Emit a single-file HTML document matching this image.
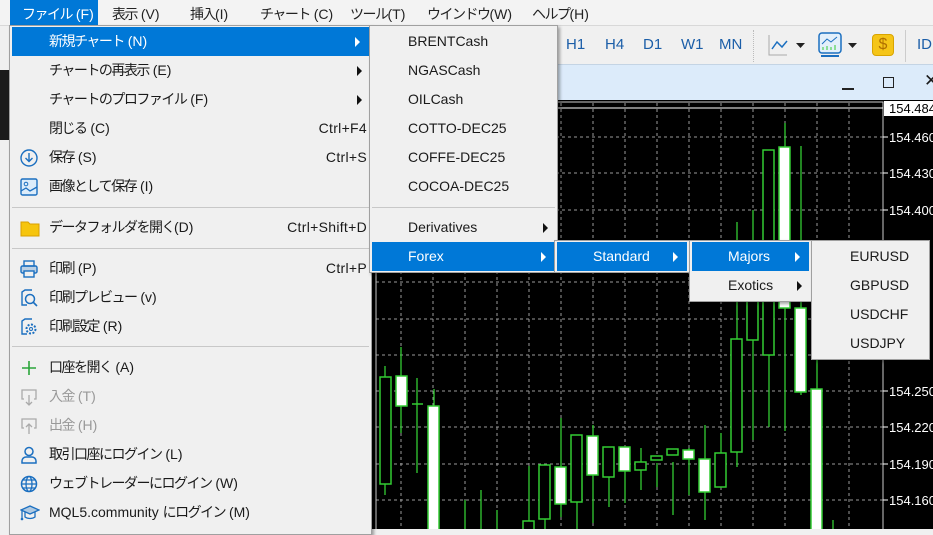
<!DOCTYPE html>
<html><head><meta charset="utf-8">
<style>
*{margin:0;padding:0;box-sizing:border-box}
body{width:933px;height:529px;overflow:hidden;position:relative;background:#f0f0f0;font-family:"Liberation Sans","Noto Sans CJK JP",sans-serif;font-size:14px;color:#1a1a1a}
.a{position:absolute}
.mb span{position:absolute;top:4px;font-size:14px;color:#222;white-space:nowrap}
.menu{position:absolute;background:#f0f0f0;border:1px solid #a0a0a0;box-shadow:2px 2px 3px rgba(0,0,0,.35)}
.it{position:absolute;left:0;right:0;height:29px;line-height:29px;white-space:nowrap}
.it.h{background:#0078d7;color:#fff;margin:0 2px}
.arr{position:absolute;right:9px;top:10px;width:0;height:0;border-left:5px solid #111;border-top:5px solid transparent;border-bottom:5px solid transparent}
.h .arr{border-left-color:#fff}
.sc{position:absolute;right:4px;letter-spacing:.3px}
b{font-weight:normal;letter-spacing:-1.5px}
.sep{position:absolute;left:2px;right:2px;height:1px;background:#c8c8c8}
.ic{position:absolute;left:10px;top:6px}
.dis{color:#999}
.tb{position:absolute;top:36px;color:#1b5ea8;font-size:15px}
</style></head><body>
<div class="a" style="left:0;top:0;width:933px;height:25px;background:#f3f3f3"></div>
<div class="a" style="left:10px;top:0;width:88px;height:25px;background:#0078d7"></div>
<div class="mb">
<span style="left:22px;color:#fff"><b>ファイル</b> (F)</span>
<span style="left:112px"><b>表示</b> (V)</span>
<span style="left:190px"><b>挿入</b>(I)</span>
<span style="left:260px"><b>チャート</b> (C)</span>
<span style="left:350px"><b>ツール</b>(T)</span>
<span style="left:427px"><b>ウインドウ</b>(W)</span>
<span style="left:532px"><b>ヘルプ</b>(H)</span>
</div>
<div class="a" style="left:0;top:25px;width:933px;height:39px;background:#f0f0f0;border-top:1px solid #d8d8d8"></div>
<div class="tb" style="left:566px">H1</div>
<div class="tb" style="left:605px">H4</div>
<div class="tb" style="left:643px">D1</div>
<div class="tb" style="left:681px">W1</div>
<div class="tb" style="left:719px">MN</div>
<div class="a" style="left:753px;top:30px;height:32px;border-left:1px dotted #bbb"></div>
<svg class="a" style="left:767px;top:33px" width="45" height="26"><path d="M2 2V22H20" stroke="#aaa" fill="none"/><path d="M5 16L10 9L15 14L20 8" stroke="#1b6fc0" stroke-width="1.5" fill="none"/><path d="M29 10h9l-4.5 5z" fill="#222"/></svg>
<svg class="a" style="left:818px;top:32px" width="45" height="28"><rect x="1" y="1" width="22" height="20" rx="3" fill="#e3f0fb" stroke="#1b6fc0" stroke-width="1.5"/><path d="M4 12l5-5 4 3 6-5" stroke="#1b6fc0" fill="none"/><path d="M5 18v-3M9 18v-4M13 18v-3M17 18v-5" stroke="#3c3"/><path d="M3 24h18" stroke="#1b6fc0" stroke-width="2"/><path d="M30 11h9l-4.5 5z" fill="#222"/></svg>
<div class="a" style="left:872px;top:34px;width:22px;height:22px;background:#f5c518;border:1px solid #d9a400;border-radius:4px;color:#b07000;font-size:16px;text-align:center;line-height:20px">$</div>
<div class="a" style="left:905px;top:30px;height:32px;border-left:1px solid #ccc"></div>
<div class="tb" style="left:917px">IDE</div>
<div class="a" style="left:370px;top:64px;width:563px;height:36px;background:#dcebfa;border-top:1px solid #c4d4e4"></div>
<div class="a" style="left:842px;top:88px;width:12px;height:1.5px;background:#222"></div>
<div class="a" style="left:883px;top:77px;width:11px;height:11px;border:1.5px solid #222"></div>
<div class="a" style="left:924px;top:71px;font-size:17px">✕</div>
<svg class="a" style="left:370px;top:100px" width="563" height="429">
<rect width="563" height="429" fill="#000"/>
<g stroke="#9a9a9a" stroke-dasharray="3,3" stroke-width="1">
<path d="M31 3V429M63 3V429M95 3V429M127 3V429M159 3V429M191 3V429M223 3V429M255 3V429M287 3V429M319 3V429M351 3V429M383 3V429M415 3V429M447 3V429M479 3V429"/>
<path d="M6 37H513M6 73H513M6 110H513M6 146H513M6 182H513M6 219H513M6 255H513M6 291H513M6 327H513M6 364H513M6 400H513"/>
</g>
<rect x="6" y="2" width="507" height="430" fill="none" stroke="#ccc"/>
<path d="M6 8H513" stroke="#fff"/>
<g stroke="#3c3" stroke-width="1.3">
<path d="M15 266V395M31 247V333M47 278V373M64 289V429M95 400V429M111 390V429M127 410V429M159 366V429M175 365V429M191 318V417M207 335V429M223 325V423M239 348V407M255 348V403M271 348V390M287 363V387M303 362V415M319 348V395M335 325V420M351 333V387M367 122V367M383 110V340M399 98V327M415 23V331M431 46V295M447 252V429M463 420V429M479 430V429"/>
</g>
<g stroke="#3c3" stroke-width="1.5">
<rect x="10" y="277" width="11" height="107" fill="#000"/>
<rect x="26" y="276" width="11" height="30" fill="#fff"/>
<path d="M42 304H53"/>
<rect x="58" y="306" width="11" height="130" fill="#fff"/>
<rect x="153" y="421" width="11" height="20" fill="#000"/>
<rect x="169" y="365" width="11" height="54" fill="#000"/>
<rect x="185" y="367" width="11" height="37" fill="#fff"/>
<rect x="201" y="335" width="11" height="67" fill="#000"/>
<rect x="217" y="336" width="11" height="39" fill="#fff"/>
<rect x="233" y="347" width="11" height="30" fill="#000"/>
<rect x="249" y="347" width="11" height="24" fill="#fff"/>
<rect x="265" y="362" width="11" height="8" fill="#000"/>
<rect x="281" y="356" width="11" height="4" fill="#000"/>
<rect x="297" y="349" width="11" height="6" fill="#000"/>
<rect x="313" y="350" width="11" height="9" fill="#fff"/>
<rect x="329" y="359" width="11" height="33" fill="#fff"/>
<rect x="345" y="353" width="11" height="34" fill="#000"/>
<rect x="361" y="239" width="11" height="113" fill="#000"/>
<rect x="377" y="150" width="11" height="90" fill="#000"/>
<rect x="393" y="50" width="11" height="205" fill="#000"/>
<rect x="409" y="47" width="11" height="161" fill="#fff"/>
<rect x="425" y="208" width="11" height="84" fill="#fff"/>
<rect x="441" y="289" width="11" height="145" fill="#fff"/>
</g>
<g fill="#fff" font-size="13" font-family="Liberation Sans,sans-serif">
<rect x="514" y="1" width="50" height="15" fill="#fff"/>
<text x="519" y="13" fill="#000">154.484</text>
<path d="M513 37h5M513 73h5M513 110h5M513 291h5M513 327h5M513 364h5M513 400h5" stroke="#fff"/>
<text x="519" y="42">154.460</text><text x="519" y="78">154.430</text><text x="519" y="115">154.400</text>
<text x="519" y="296">154.250</text><text x="519" y="332">154.220</text><text x="519" y="369">154.190</text><text x="519" y="405">154.160</text>
</g>
</svg>
<div class="a" style="left:0;top:70px;width:9px;height:70px;background:#1a1a1a"></div>

<div class="menu" style="left:9px;top:25px;width:363px;height:510px">
<div class="it h" style="top:1px"><span style="margin-left:37px"><b>新規チャート</b> (N)</span><i class="arr"></i></div>
<div class="it" style="top:30px"><span style="margin-left:39px"><b>チャートの再表示</b> (E)</span><i class="arr"></i></div>
<div class="it" style="top:59px"><span style="margin-left:39px"><b>チャートのプロファイル</b> (F)</span><i class="arr"></i></div>
<div class="it" style="top:88px"><span style="margin-left:39px"><b>閉じる</b> (C)</span><span class="sc">Ctrl+F4</span></div>
<div class="it" style="top:117px"><svg class="ic" width="18" height="18"><circle cx="9" cy="9" r="8" fill="none" stroke="#1b6fc0" stroke-width="1.4"/><path d="M9 4v8M5.5 9l3.5 3.5L12.5 9" stroke="#1b6fc0" stroke-width="1.4" fill="none"/></svg><span style="margin-left:39px"><b>保存</b> (S)</span><span class="sc">Ctrl+S</span></div>
<div class="it" style="top:146px"><svg class="ic" width="18" height="18"><rect x="1" y="1" width="16" height="16" rx="1.5" fill="#dcecfa" stroke="#1b6fc0" stroke-width="1.4"/><circle cx="6" cy="6" r="1.8" fill="none" stroke="#1b6fc0"/><path d="M1 13l5-3 4 3 7-4" stroke="#1b6fc0" fill="none" stroke-width="1.3"/></svg><span style="margin-left:39px"><b>画像として保存</b> (I)</span></div>
<div class="sep" style="top:181px"></div>
<div class="it" style="top:187px"><svg class="ic" width="20" height="18"><path d="M1 3h7l2 2h9v12H1z" fill="#f6c50e" stroke="#d9a000"/></svg><span style="margin-left:39px"><b>データフォルダを開く</b>(D)</span><span class="sc">Ctrl+Shift+D</span></div>
<div class="sep" style="top:222px"></div>
<div class="it" style="top:228px"><svg class="ic" width="18" height="18"><rect x="4" y="1" width="10" height="5" fill="none" stroke="#1b6fc0" stroke-width="1.4"/><rect x="1" y="6" width="16" height="7" rx="1.5" fill="#1b6fc0" fill-opacity=".25" stroke="#1b6fc0" stroke-width="1.4"/><rect x="4" y="11" width="10" height="6" fill="#f0f0f0" stroke="#1b6fc0" stroke-width="1.4"/></svg><span style="margin-left:39px"><b>印刷</b> (P)</span><span class="sc">Ctrl+P</span></div>
<div class="it" style="top:257px"><svg class="ic" width="18" height="18"><path d="M7 16H2V3l3-2h7" stroke="#1b6fc0" stroke-width="1.4" fill="none"/><circle cx="10" cy="10" r="4.5" fill="none" stroke="#1b6fc0" stroke-width="1.5"/><path d="M13 13l4 4" stroke="#1b6fc0" stroke-width="1.6"/></svg><span style="margin-left:39px"><b>印刷プレビュー</b> (v)</span></div>
<div class="it" style="top:286px"><svg class="ic" width="18" height="18"><path d="M7 16H2V3l3-2h7" stroke="#1b6fc0" stroke-width="1.4" fill="none"/><circle cx="11" cy="11" r="4.5" fill="none" stroke="#1b6fc0" stroke-width="2" stroke-dasharray="2,1.5"/><circle cx="11" cy="11" r="1.5" fill="none" stroke="#1b6fc0"/></svg><span style="margin-left:39px"><b>印刷設定</b> (R)</span></div>
<div class="sep" style="top:320px"></div>
<div class="it" style="top:327px"><svg class="ic" width="18" height="18"><path d="M9 2v14M2 9h14" stroke="#2aa53a" stroke-width="1.6"/></svg><span style="margin-left:39px"><b>口座を開く</b> (A)</span></div>
<div class="it dis" style="top:356px"><svg class="ic" width="18" height="18"><path d="M4 11H2V2h14v9h-2M9 7v10M6 14l3 3 3-3" stroke="#aaa" stroke-width="1.3" fill="none"/></svg><span style="margin-left:39px"><b>入金</b> (T)</span></div>
<div class="it dis" style="top:385px"><svg class="ic" width="18" height="18"><path d="M4 11H2V2h14v9h-2M9 17V7M6 10l3-3 3 3" stroke="#aaa" stroke-width="1.3" fill="none"/></svg><span style="margin-left:39px"><b>出金</b> (H)</span></div>
<div class="it" style="top:414px"><svg class="ic" width="18" height="18"><circle cx="9" cy="5.5" r="4" fill="none" stroke="#1b6fc0" stroke-width="1.5"/><path d="M2 17v-2a4 4 0 014-4h6a4 4 0 014 4v2z" fill="none" stroke="#1b6fc0" stroke-width="1.5"/></svg><span style="margin-left:39px"><b>取引口座にログイン</b> (L)</span></div>
<div class="it" style="top:443px"><svg class="ic" width="18" height="18"><circle cx="9" cy="9" r="7.5" fill="none" stroke="#1b6fc0" stroke-width="1.5"/><ellipse cx="9" cy="9" rx="3" ry="7.5" fill="none" stroke="#1b6fc0" stroke-width="1.3"/><path d="M1.5 9h15M3 5h12M3 13h12" stroke="#1b6fc0" stroke-width="1.2"/></svg><span style="margin-left:39px"><b>ウェブトレーダーにログイン</b> (W)</span></div>
<div class="it" style="top:472px"><svg class="ic" width="20" height="18"><path d="M1 6l9-4 9 4-9 4z" fill="#1b6fc0" fill-opacity=".3" stroke="#1b6fc0" stroke-width="1.3"/><path d="M5 8v5c3 2 7 2 10 0V8" fill="none" stroke="#1b6fc0" stroke-width="1.3"/><path d="M2 6v8" stroke="#1b6fc0" stroke-width="1.3"/><circle cx="2" cy="15" r="1.3" fill="#1b6fc0"/></svg><span style="margin-left:39px">MQL5.community <b>にログイン</b> (M)</span></div>
</div>

<div class="menu" style="left:369px;top:25px;width:189px;height:248px">
<div class="it" style="top:1px"><span style="margin-left:38px">BRENTCash</span></div>
<div class="it" style="top:30px"><span style="margin-left:38px">NGASCash</span></div>
<div class="it" style="top:59px"><span style="margin-left:38px">OILCash</span></div>
<div class="it" style="top:88px"><span style="margin-left:38px">COTTO-DEC25</span></div>
<div class="it" style="top:117px"><span style="margin-left:38px">COFFE-DEC25</span></div>
<div class="it" style="top:146px"><span style="margin-left:38px">COCOA-DEC25</span></div>
<div class="sep" style="top:181px"></div>
<div class="it" style="top:187px"><span style="margin-left:38px">Derivatives</span><i class="arr"></i></div>
<div class="it h" style="top:216px"><span style="margin-left:36px">Forex</span><i class="arr"></i></div>
</div>
<div class="menu" style="left:554px;top:240px;width:136px;height:33px">
<div class="it h" style="top:1px"><span style="margin-left:36px">Standard</span><i class="arr"></i></div>
</div>
<div class="menu" style="left:689px;top:240px;width:123px;height:62px">
<div class="it h" style="top:1px"><span style="margin-left:36px">Majors</span><i class="arr"></i></div>
<div class="it" style="top:30px"><span style="margin-left:38px">Exotics</span><i class="arr"></i></div>
</div>
<div class="menu" style="left:811px;top:240px;width:119px;height:120px">
<div class="it" style="top:1px"><span style="margin-left:38px">EURUSD</span></div>
<div class="it" style="top:30px"><span style="margin-left:38px">GBPUSD</span></div>
<div class="it" style="top:59px"><span style="margin-left:38px">USDCHF</span></div>
<div class="it" style="top:88px"><span style="margin-left:38px">USDJPY</span></div>
</div>
</body></html>
